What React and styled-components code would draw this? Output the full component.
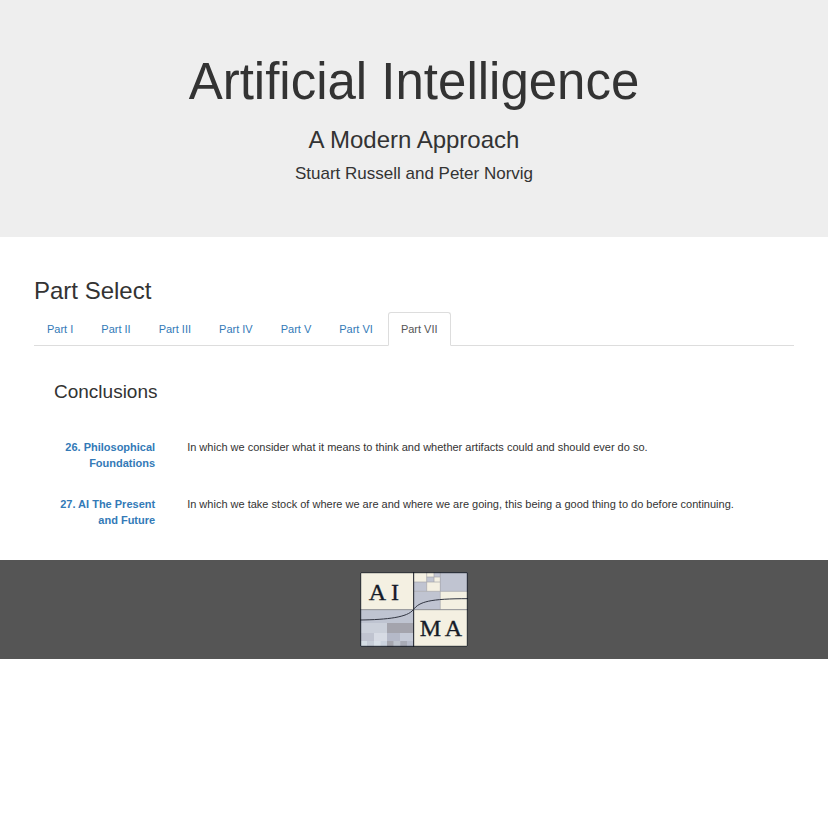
import { useState } from 'react';
import styled, { createGlobalStyle } from 'styled-components';

const parts = ["Part I", "Part II", "Part III", "Part IV", "Part V", "Part VI", "Part VII"];

const chapters = [
    {
        title: "26. Philosophical Foundations",
        text: "In which we consider what it means to think and whether artifacts could and should ever do so."
    },
    {
        title: "27. AI The Present and Future",
        text: "In which we take stock of where we are and where we are going, this being a good thing to do before continuing."
    }
];

export default function App() {

    const [selected, setSelected] = useState("Part VII");

    return (
        <>
            <GlobalStyle />

            <Jumbotron>
                <Title>Artificial Intelligence</Title>
                <Subtitle>A Modern Approach</Subtitle>
                <Authors>Stuart Russell and Peter Norvig</Authors>
            </Jumbotron>

            <Main>
                <SectionTitle>Part Select</SectionTitle>

                <Tabs role="tablist">
                    {parts.map(part => (
                        <Tab
                            key={part}
                            type="button"
                            role="tab"
                            aria-selected={part === selected}
                            $active={part === selected}
                            onClick={() => setSelected(part)}
                        >
                            {part}
                        </Tab>
                    ))}
                </Tabs>

                <Panel role="tabpanel">
                    <PartTitle>Conclusions</PartTitle>
                    {chapters.map(chapter => (
                        <Chapter key={chapter.title}>
                            <ChapterName>
                                <a href="#chapter">{chapter.title}</a>
                            </ChapterName>
                            <p>{chapter.text}</p>
                        </Chapter>
                    ))}
                </Panel>
            </Main>

            <Footer>
                <Logo />
            </Footer>
        </>
    )
}

function Logo() {
    return (
        <svg width="108" height="75" viewBox="0 0 324 225" role="img" aria-label="AIMA">
            <rect width="324" height="225" fill="#f4f0e2" />

            {/* top right blocks */}
            <rect x="240" y="0" width="84" height="58" fill="#c0c4d1" />
            <rect x="162" y="30" width="38" height="28" fill="#c0c4d1" />
            <rect x="162" y="58" width="78" height="55" fill="#c0c4d1" />
            <rect x="200" y="15" width="22" height="15" fill="#c0c4d1" />
            <rect x="222" y="0" width="18" height="15" fill="#c0c4d1" />
            <path d="M162 30H240M162 58H324M200 0V58M241 0V113M200 15H240M222 0V30" fill="none" stroke="#a3a4a9" strokeWidth="2" />

            {/* bottom left blocks */}
            <rect x="0" y="113" width="161" height="112" fill="#bfc4d1" />
            <rect x="0" y="153" width="81" height="30" fill="#cbd0da" />
            <rect x="81" y="153" width="80" height="30" fill="#a4a4ad" />
            <rect x="0" y="183" width="42" height="24" fill="#c0c4d0" />
            <rect x="42" y="183" width="39" height="42" fill="#d7dbe4" />
            <rect x="81" y="183" width="39" height="24" fill="#b5b9c8" />
            <rect x="120" y="183" width="41" height="24" fill="#c5cad7" />
            <rect x="0" y="207" width="22" height="18" fill="#d5dee5" />
            <rect x="22" y="207" width="20" height="18" fill="#c7ced8" />
            <rect x="42" y="207" width="20" height="18" fill="#d9e1e8" />
            <rect x="62" y="207" width="19" height="18" fill="#cbd3de" />
            <rect x="81" y="207" width="20" height="18" fill="#a5a6ae" />
            <rect x="101" y="207" width="20" height="18" fill="#bec4cd" />
            <rect x="121" y="207" width="20" height="18" fill="#a8abb6" />
            <rect x="141" y="207" width="20" height="18" fill="#b8bdcc" />

            <path d="M0 113H324" stroke="#8f9095" strokeWidth="3" />
            <path d="M161 0V225" stroke="#171b25" strokeWidth="3" />
            <path d="M0 144C82 143 143 136 160 113C178 89 210 80 324 80" fill="none" stroke="#303440" strokeWidth="3" />
            <rect x="2" y="2" width="320" height="221" fill="none" stroke="#10151d" strokeWidth="3" />

            <LogoLetter x="52" y="83">A</LogoLetter>
            <LogoLetter x="105" y="83">I</LogoLetter>
            <LogoLetter x="211" y="192">M</LogoLetter>
            <LogoLetter x="280" y="192">A</LogoLetter>
        </svg>
    )
}

/* --- STYLES --- */
const GlobalStyle = createGlobalStyle`
    * {
        box-sizing: border-box;
    }
    body {
        margin: 0;
        background: #fff;
        color: #333;
        font-family: "Liberation Sans", Arial, sans-serif;
        font-size: 11px;
        line-height: 16px;
    }
    h1, h2, h3, h4, p {
        margin: 0;
        font-weight: 400;
    }
`;

const Jumbotron = styled.header`
    padding: 54px 34px 53px;
    background: #eee;
    text-align: center;
`;

const Title = styled.h1`
    font-size: 51px;
    line-height: 56px;
`;

const Subtitle = styled.h2`
    margin-top: 16px;
    font-size: 24px;
    line-height: 28px;
`;

const Authors = styled.p`
    margin-top: 10px;
    font-size: 17px;
    line-height: 20px;
`;

const Main = styled.main`
    padding: 40px 34px 32px;
`;

const SectionTitle = styled.h2`
    font-size: 24px;
    line-height: 28px;
`;

const Tabs = styled.div`
    display: flex;
    gap: 2px;
    margin-top: 7px;
    border-bottom: 1px solid #ddd;
`;

const Tab = styled.button`
    height: 34px;
    margin-bottom: -1px;
    padding: 0 12px;
    border: 1px solid ${props => props.$active ? "#ddd" : "transparent"};
    border-bottom-color: ${props => props.$active ? "#fff" : "transparent"};
    border-radius: 3px 3px 0 0;
    background: ${props => props.$active ? "#fff" : "transparent"};
    color: ${props => props.$active ? "#555" : "#337ab7"};
    font-family: inherit;
    font-size: 11px;
    cursor: pointer;
`;

const Panel = styled.section`
    padding: 35px 0 0 20px;
`;

const PartTitle = styled.h3`
    margin-bottom: 36px;
    font-size: 19px;
    line-height: 22px;
`;

const Chapter = styled.article`
    display: grid;
    grid-template-columns: 1fr 6fr;
    gap: 32px;

    & + & {
        margin-top: 25px;
    }
`;

const ChapterName = styled.h4`
    font-weight: 700;
    text-align: right;

    a {
        color: #337ab7;
        text-decoration: none;
    }
`;

const Footer = styled.footer`
    display: flex;
    justify-content: center;
    padding: 12px;
    background: #555;
`;

const LogoLetter = styled.text`
    fill: #151b28;
    stroke: #151b28;
    stroke-width: 1px;
    font-family: "Liberation Serif", "Times New Roman", serif;
    font-size: 72px;
    text-anchor: middle;
`;
